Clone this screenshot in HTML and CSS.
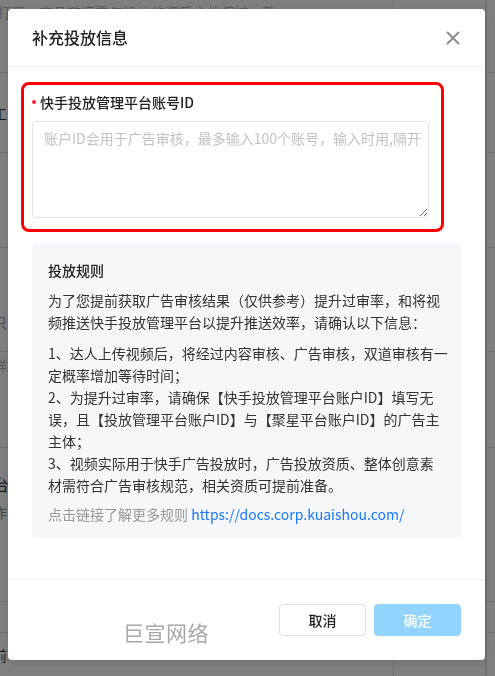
FILE: index.html
```html
<!DOCTYPE html>
<html lang="zh-CN">

<head>
    <meta charset="UTF-8">
    <title>补充投放信息</title>
    <link rel="stylesheet" href="styles.css">
</head>

<body>
    <div class="page">
        <div class="row row-a"><span class="frag light">打开：产品链接需与投放的资质主体保持一致</span></div>
        <div class="row row-b"><span class="frag">工</span></div>
        <div class="row row-c"></div>
        <div class="row row-d"><span class="frag">只</span></div>
        <div class="row row-e"><span class="frag light">详</span></div>
        <div class="row row-f">
            <span class="frag big">台</span>
            <span class="frag">作</span>
        </div>
        <div class="row row-g"></div>
        <div class="row row-h"><span class="frag">前</span></div>
        <div class="col-line"></div>
        <div class="edge-line"></div>
    </div>

    <div class="mask">
        <div class="modal">
            <div class="modal-header">
                <div class="modal-title">补充投放信息</div>
                <button class="close" aria-label="关闭">
                    <svg width="14" height="14" viewBox="0 0 14 14">
                        <path d="M1.5 1.5 L12.5 12.5 M12.5 1.5 L1.5 12.5" stroke="#8c8c8c" stroke-width="2" stroke-linecap="round" fill="none"/>
                    </svg>
                </button>
            </div>

            <div class="modal-body">
                <div class="mark">
                    <div class="form-item">
                        <label class="form-label"><span class="req"></span>快手投放管理平台账号ID</label>
                        <textarea class="input" wrap="off" placeholder="账户ID会用于广告审核，最多输入100个账号，输入时用,隔开"></textarea>
                    </div>
                </div>

                <div class="rules">
                    <div class="rules-title">投放规则</div>
                    <p class="rules-intro">为了您提前获取广告审核结果（仅供参考）提升过审率，和将视频推送快手投放管理平台以提升推送效率，请确认以下信息：</p>
                    <div class="rules-list">
                        <p>1、达人上传视频后，将经过内容审核、广告审核，双道审核有一定概率增加等待时间；</p>
                        <p>2、为提升过审率，请确保【快手投放管理平台账户ID】填写无误，且【投放管理平台账户ID】与【聚星平台账户ID】的广告主主体；</p>
                        <p>3、视频实际用于快手广告投放时，广告投放资质、整体创意素<br>材需符合广告审核规范，相关资质可提前准备。</p>
                    </div>
                    <p class="rules-link">点击链接了解更多规则 <a href="#">https://docs.corp.kuaishou.com/</a></p>
                </div>
            </div>

            <div class="modal-footer">
                <button class="btn">取消</button>
                <button class="btn btn-primary" disabled>确定</button>
            </div>

            <div class="watermark">巨宣网络</div>
        </div>
    </div>
</body>

</html>
```

FILE: styles.css
```css
* {
    box-sizing: border-box;
}

body {
    margin: 0;
    background-color: #fff;
    font-family: "Noto Sans CJK SC", "Noto Sans", sans-serif;
    font-size: 14px;
    color: #333;
    overflow: hidden;
}

/* page behind the mask */
.page {
    height: 676px;
    display: flex;
    flex-direction: column;
}

.row {
    border-bottom: 1px solid #dcdcdc;
    display: flex;
    flex-direction: column;
    flex-shrink: 0;
}

.frag {
    margin-left: -7px;
    line-height: 22px;
    color: #333;
    white-space: nowrap;
}

.frag.light {
    color: #b4b4b4;
}

.frag.big {
    font-size: 16px;
}

.row-a { height: 73px; padding-top: 1px; }
.row-a .frag { margin-left: -3px; }
.row-b { height: 80px; padding-top: 29px; }
.row-c { height: 95px; }
.row-d { height: 104px; padding-top: 63px; }
.row-d .frag { color: #999; }
.row-e { height: 96px; padding-top: 2px; }
.row-f { height: 154px; padding-top: 25px; }
.row-f .frag + .frag { color: #888; margin-top: 6px; }
.row-g { height: 31px; }
.row-h { border-bottom: none; padding-top: 11px; }

.col-line {
    position: absolute;
    left: 393px;
    top: 0;
    width: 1px;
    height: 100%;
    background-color: #dcdcdc;
}

.edge-line {
    position: absolute;
    left: 485px;
    top: 0;
    width: 2px;
    height: 100%;
    background-color: #e2e2e2;
}

/* modal */
.mask {
    position: fixed;
    inset: 0;
    background-color: rgba(0, 0, 0, 0.5);
    padding: 9px 0 0 8px;
}

.modal {
    position: relative;
    width: 477px;
    background-color: #fff;
    border-radius: 4px;
    box-shadow: 0 2px 8px rgba(0, 0, 0, 0.12);
}

.modal-header {
    height: 58px;
    padding: 0 24px;
    display: flex;
    align-items: center;
    justify-content: space-between;
    border-bottom: 1px solid #f2f2f2;
}

.modal-title {
    font-size: 16px;
    font-weight: 500;
    color: #222;
    line-height: 24px;
    padding-bottom: 1px;
}

.close {
    border: none;
    background: none;
    padding: 0;
    margin-right: 1px;
    width: 14px;
    height: 14px;
    display: flex;
    cursor: pointer;
}

.modal-body {
    padding: 15px 24px 41px;
}

.mark {
    width: 423px;
    margin-left: -11px;
    margin-bottom: 11px;
    padding: 6px 12px 11px 8px;
    border: 3px solid #ff0000;
    border-radius: 8px;
}

.form-label {
    display: flex;
    align-items: center;
    line-height: 22px;
    font-weight: 500;
    color: #222;
    margin-bottom: 8px;
}

.req {
    width: 4px;
    height: 4px;
    border-radius: 50%;
    background-color: #f5222d;
    margin-right: 4px;
}

.input {
    display: block;
    width: 397px;
    height: 97px;
    padding: 5px 8px 5px 11px;
    border: 1px solid #e3e3e3;
    border-radius: 4px;
    font-family: inherit;
    font-size: 14px;
    line-height: 22px;
    color: #333;
    outline: none;
    overflow: hidden;
}

.input::placeholder {
    color: #c2c2c2;
}

.rules {
    background-color: #f6f7f9;
    border-radius: 4px;
    padding: 16px 12px 13px 16px;
    line-height: 22px;
    color: #333;
}

.rules p {
    margin: 0;
}

.rules-title {
    font-weight: 500;
    color: #222;
    margin-bottom: 8px;
}

.rules-intro {
    margin-bottom: 9px !important;
}

.rules-list {
    margin-bottom: 7px;
}

.rules-link {
    color: #999;
}

.rules-link a {
    color: #1677ff;
    text-decoration: none;
}

.modal-footer {
    padding: 24px;
    display: flex;
    justify-content: flex-end;
    gap: 8px;
    border-top: 1px solid #f2f2f2;
}

.btn {
    width: 87px;
    height: 32px;
    border: 1px solid #dedede;
    border-radius: 4px;
    background-color: #fff;
    font-family: inherit;
    font-size: 14px;
    font-weight: 500;
    color: #222;
    cursor: pointer;
}

.btn-primary {
    background-color: #91d5ff;
    border-color: #91d5ff;
    color: #fff;
    cursor: not-allowed;
}

.watermark {
    position: absolute;
    left: 115px;
    bottom: 14px;
    font-size: 21px;
    line-height: 28px;
    color: #a8a8a8;
    letter-spacing: 0.5px;
    pointer-events: none;
}
```
